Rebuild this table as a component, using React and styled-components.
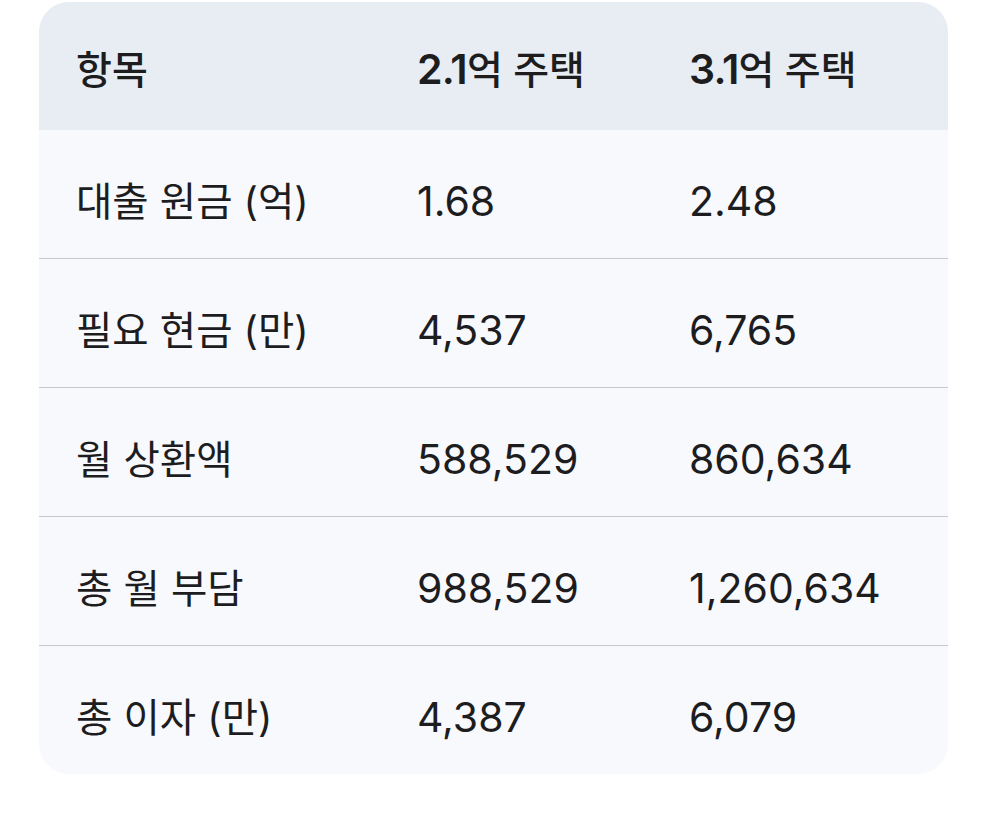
import React from "react";
import styled, { createGlobalStyle } from "styled-components";

const rows = [
  { label: "대출 원금 (억)", a: "1.68", b: "2.48" },
  { label: "필요 현금 (만)", a: "4,537", b: "6,765" },
  { label: "월 상환액", a: "588,529", b: "860,634" },
  { label: "총 월 부담", a: "988,529", b: "1,260,634" },
  { label: "총 이자 (만)", a: "4,387", b: "6,079" },
];

const App = () => {
  return (
    <Page>
      <Card>
        <Table>
          <thead>
            <tr>
              <HeadCell>항목</HeadCell>
              <HeadCell>
                <HeadNum>2.1</HeadNum>억 주택
              </HeadCell>
              <HeadCell>
                <HeadNum>3.1</HeadNum>억 주택
              </HeadCell>
            </tr>
          </thead>
          <tbody>
            {rows.map((row, i) => (
              <Row key={row.label} $last={i === rows.length - 1}>
                <Cell>{row.label}</Cell>
                <Cell $num>{row.a}</Cell>
                <Cell $num>{row.b}</Cell>
              </Row>
            ))}
          </tbody>
        </Table>
      </Card>
    </Page>
  );
};

const GlobalStyle = createGlobalStyle`
  body {
    margin: 0;
    background: #ffffff;
    font-family: Inter, "Noto Sans CJK KR", sans-serif;
    color: #1d1d1f;
  }
`;

const PageWrap = styled.div`
  padding: 2px 39px 0 39px;
`;

const Page = ({ children }) => (
  <>
    <GlobalStyle />
    <PageWrap>{children}</PageWrap>
  </>
);

const Card = styled.div`
  width: 909px;
  border-radius: 30px;
  overflow: hidden;
  background: #f8f9fc;
`;

const Table = styled.table`
  width: 100%;
  border-collapse: collapse;
  table-layout: fixed;
`;

const HeadCell = styled.th`
  background: #e8edf3;
  height: 126px;
  padding: 2px 0 0 37px;
  text-align: left;
  font-size: 39px;
  font-weight: 500;
  white-space: nowrap;
  &:nth-child(1) {
    width: 304px;
  }
  &:nth-child(2) {
    width: 235px;
  }
`;

const HeadNum = styled.span`
  font-size: 41px;
  font-weight: 600;
  letter-spacing: -0.8px;
`;

const Row = styled.tr`
  border-bottom: ${(p) => (p.$last ? "none" : "1px solid #c6c8cc")};
`;

const Cell = styled.td`
  height: ${(p) => (p.$num ? 114 : 120)}px;
  padding: ${(p) => (p.$num ? 14 : 8)}px 0 0 37px;
  font-size: ${(p) => (p.$num ? 41 : 39.5)}px;
  font-weight: 400;
  white-space: nowrap;
`;

export default App;
